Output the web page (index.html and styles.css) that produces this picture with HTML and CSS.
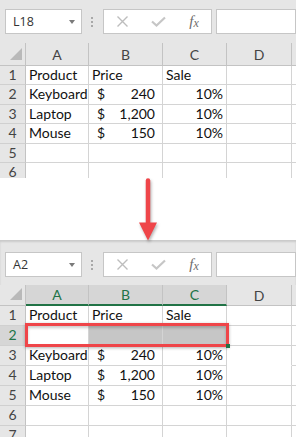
FILE: index.html
```html
<!DOCTYPE html>
<html>
<head>
<meta charset="utf-8">
<link rel="stylesheet" href="styles.css">
</head>
<body>
<div class="panel panel-top">
  <div class="toolbar">
    <div class="namebox"><span>L18</span><span class="caret"></span></div>
    <div class="grip"><i></i><i></i><i></i></div>
    <div class="fxbox">
      <span class="btn"><svg width="11" height="11" viewBox="0 0 11 11"><path d="M0.5 0.5L10.5 10.5M10.5 0.5L0.5 10.5" stroke="#bdbdbd" stroke-width="1.4" fill="none"/></svg></span>
      <span class="btn"><svg width="15" height="11" viewBox="0 0 15 11"><path d="M1 5.5L5.5 9.5L14 1.5" stroke="#c6c6c6" stroke-width="2.2" fill="none"/></svg></span>
      <span class="btn fx">f<span class="fx-x">x</span></span>
    </div>
    <div class="formula"></div>
  </div>
  <div class="sheet sheet-top">
    <div class="ch corner"><span class="tri"></span></div><div class="ch">A</div><div class="ch">B</div><div class="ch">C</div><div class="ch">D</div><div class="ch"></div>
    <div class="rh">1</div><div class="c">Product</div><div class="c">Price</div><div class="c">Sale</div><div class="c"></div><div class="c"></div>
    <div class="rh">2</div><div class="c">Keyboard</div><div class="c cur"><span>$</span><span>240</span></div><div class="c pct">10%</div><div class="c"></div><div class="c"></div>
    <div class="rh">3</div><div class="c">Laptop</div><div class="c cur"><span>$</span><span>1,200</span></div><div class="c pct">10%</div><div class="c"></div><div class="c"></div>
    <div class="rh">4</div><div class="c">Mouse</div><div class="c cur"><span>$</span><span>150</span></div><div class="c pct">10%</div><div class="c"></div><div class="c"></div>
    <div class="rh">5</div><div class="c"></div><div class="c"></div><div class="c"></div><div class="c"></div><div class="c"></div>
    <div class="rh">6</div><div class="c"></div><div class="c"></div><div class="c"></div><div class="c"></div><div class="c"></div>
  </div>
</div>

<div class="arrow-zone">
  <svg class="arrow" width="20" height="64" viewBox="0 0 20 64"><path d="M10 2.5V46" stroke="#ef4549" stroke-width="4.5" stroke-linecap="round" fill="none"/><path d="M1 44.5H19L10 62.5Z" fill="#ef4549"/></svg>
</div>

<div class="panel panel-bottom">
  <div class="toolbar">
    <div class="namebox"><span>A2</span><span class="caret"></span></div>
    <div class="grip"><i></i><i></i><i></i></div>
    <div class="fxbox">
      <span class="btn"><svg width="11" height="11" viewBox="0 0 11 11"><path d="M0.5 0.5L10.5 10.5M10.5 0.5L0.5 10.5" stroke="#bdbdbd" stroke-width="1.4" fill="none"/></svg></span>
      <span class="btn"><svg width="15" height="11" viewBox="0 0 15 11"><path d="M1 5.5L5.5 9.5L14 1.5" stroke="#c6c6c6" stroke-width="2.2" fill="none"/></svg></span>
      <span class="btn fx">f<span class="fx-x">x</span></span>
    </div>
    <div class="formula"></div>
  </div>
  <div class="sheet sheet-bottom">
    <div class="ch corner"><span class="tri"></span></div><div class="ch sel">A</div><div class="ch sel">B</div><div class="ch sel">C</div><div class="ch">D</div><div class="ch"></div>
    <div class="rh">1</div><div class="c">Product</div><div class="c">Price</div><div class="c">Sale</div><div class="c"></div><div class="c"></div>
    <div class="rh rsel">2</div><div class="c"></div><div class="c shade"></div><div class="c shade"></div><div class="c"></div><div class="c"></div>
    <div class="rh">3</div><div class="c">Keyboard</div><div class="c cur"><span>$</span><span>240</span></div><div class="c pct">10%</div><div class="c stub"></div><div class="c"></div>
    <div class="rh">4</div><div class="c">Laptop</div><div class="c cur"><span>$</span><span>1,200</span></div><div class="c pct">10%</div><div class="c"></div><div class="c"></div>
    <div class="rh">5</div><div class="c">Mouse</div><div class="c cur"><span>$</span><span>150</span></div><div class="c pct">10%</div><div class="c"></div><div class="c"></div>
    <div class="rh">6</div><div class="c"></div><div class="c"></div><div class="c"></div><div class="c"></div><div class="c"></div>
    <div class="rh">7</div><div class="c"></div><div class="c"></div><div class="c"></div><div class="c"></div><div class="c"></div>
    <div class="redbox"></div>
    <div class="handle"></div>
  </div>
</div>
</body>
</html>
```
FILE: styles.css
```css
html, body {
  margin: 0;
  padding: 0;
}
body {
  width: 296px;
  height: 437px;
  overflow: hidden;
  background: #ffffff;
  font-family: Lato, "Liberation Sans", sans-serif;
}

.panel {
  background: #e6e6e6;
  overflow: hidden;
}
.panel-top {
  height: 178px;
}
.panel-bottom {
  height: 197px;
  box-shadow: inset 0 2px 2px rgba(0, 0, 0, 0.12);
}

.toolbar {
  display: flex;
  align-items: flex-start;
  height: 43px;
  padding: 9px 0 0 5px;
  box-sizing: border-box;
}
.panel-bottom .toolbar {
  height: 45px;
  padding-top: 12px;
}

.namebox {
  width: 102px;
  height: 25px;
  box-sizing: border-box;
  border: 1px solid #c6c6c6;
  background: #fff;
  display: flex;
  align-items: center;
  justify-content: space-between;
  padding: 0 6px 0 7px;
  font-family: "Open Sans", sans-serif;
  font-size: 12.5px;
  color: #333;
}
.caret {
  width: 0;
  height: 0;
  border-left: 3.5px solid transparent;
  border-right: 3.5px solid transparent;
  border-top: 4px solid #7a7a7a;
}

.grip {
  width: 30px;
  height: 25px;
  display: flex;
  flex-direction: column;
  align-items: center;
  justify-content: center;
  gap: 2px;
}
.grip i {
  display: block;
  width: 2px;
  height: 2px;
  background: #a8a8a8;
}

.fxbox {
  width: 109px;
  height: 25px;
  box-sizing: border-box;
  border: 1px solid #c6c6c6;
  background: #fff;
  display: grid;
  grid-template-columns: 36px 36px 36px;
  align-items: center;
}
.btn {
  display: flex;
  justify-content: center;
  align-items: center;
}
.fx {
  font-family: "Liberation Serif", serif;
  font-style: italic;
  font-size: 15px;
  color: #6d6d6d;
  line-height: 1;
}
.fx-x {
  font-size: 12px;
  position: relative;
  top: 1px;
}

.formula {
  margin-left: 4px;
  width: 80px;
  height: 25px;
  box-sizing: border-box;
  border: 1px solid #c6c6c6;
  background: #fff;
  flex: none;
}

.sheet {
  display: grid;
  grid-template-columns: 26px 63px 74px 64px 65px 10px;
  font-size: 14px;
}
.sheet-top {
  grid-template-rows: 23px repeat(6, 19.4px);
}
.sheet-bottom {
  position: relative;
  grid-template-rows: 21px repeat(7, 20px);
}

.ch {
  background: #e6e6e6;
  border-right: 1px solid #c3c3c3;
  border-bottom: 1px solid #c3c3c3;
  color: #444;
  display: flex;
  align-items: center;
  justify-content: center;
  box-sizing: border-box;
}
.ch.sel {
  background: #d6d6d6;
  color: #217346;
  border-bottom: 2px solid #217346;
}
.corner {
  justify-content: flex-end;
  align-items: flex-end;
  padding: 0 3px 5px 0;
}
.tri {
  width: 0;
  height: 0;
  border-left: 12px solid transparent;
  border-bottom: 12px solid #b9b9b9;
}

.rh {
  background: #e6e6e6;
  border-right: 1px solid #c3c3c3;
  border-bottom: 1px solid #d0d0d0;
  color: #444;
  text-align: center;
  line-height: 18px;
  box-sizing: border-box;
}
.rh.rsel {
  background: #d6d6d6;
  color: #217346;
}

.c {
  background: #fff;
  border-right: 1px solid #d4d4d4;
  border-bottom: 1px solid #d4d4d4;
  box-sizing: border-box;
  padding: 0 3px;
  line-height: 18px;
  color: #111;
  white-space: nowrap;
  overflow: hidden;
}
.c.cur {
  display: flex;
  justify-content: space-between;
  padding: 0 7px 0 8px;
}
.c.pct {
  text-align: right;
}
.c.shade {
  background: #c6c6c6;
}
.c.stub {
  border-bottom-color: #fff;
  background: #fff linear-gradient(#b8b8b8, #b8b8b8) no-repeat 2px 100% / 19px 1px;
  background-origin: border-box;
  background-clip: border-box;
}

.redbox {
  position: absolute;
  left: 25px;
  top: 38px;
  width: 204px;
  height: 24px;
  box-sizing: border-box;
  border: 3px solid #ef4549;
  box-shadow: 0 1px 3px rgba(0, 0, 0, 0.3), inset 0 2px 3px rgba(0, 0, 0, 0.2);
}
.handle {
  position: absolute;
  left: 226px;
  top: 59px;
  width: 4px;
  height: 4px;
  background: #217346;
}

.arrow-zone {
  height: 62px;
  display: flex;
  justify-content: center;
  align-items: flex-start;
}
.arrow {
  position: relative;
  z-index: 1;
  overflow: visible;
  filter: drop-shadow(1px 2px 1.5px rgba(0, 0, 0, 0.3));
}
```
